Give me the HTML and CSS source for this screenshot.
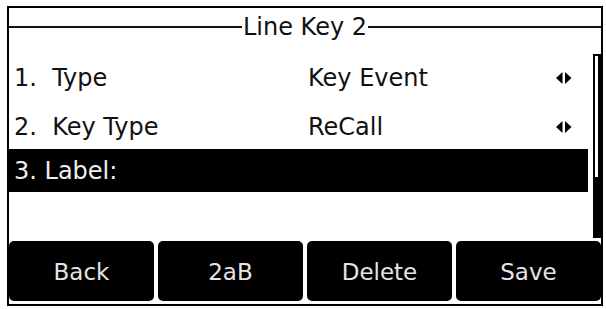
FILE: index.html
```html
<!DOCTYPE html>
<html>
<head>
<meta charset="utf-8">
<link rel="stylesheet" href="styles.css">
</head>
<body>
<div class="screen">
  <div class="title">
    <span class="rule"></span>
    <span class="title-text">Line Key 2</span>
    <span class="rule"></span>
  </div>
  <div class="body">
    <div class="list">
      <div class="row row1">
        <span class="label">1.  Type</span>
        <span class="value">Key Event</span>
        <svg class="arrows" width="16" height="12" viewBox="0 0 16 12"><polygon points="0,6 6.5,0 6.5,12"/><polygon points="9,0 15.5,6 9,12"/></svg>
      </div>
      <div class="row row2">
        <span class="label">2.  Key Type</span>
        <span class="value">ReCall</span>
        <svg class="arrows" width="16" height="12" viewBox="0 0 16 12"><polygon points="0,6 6.5,0 6.5,12"/><polygon points="9,0 15.5,6 9,12"/></svg>
      </div>
      <div class="row row3 selected">
        <span class="label">3. Label:</span>
      </div>
    </div>
    <div class="scroll">
      <div class="thumb"></div>
    </div>
  </div>
  <div class="softkeys">
    <div class="key">Back</div>
    <div class="key">2aB</div>
    <div class="key">Delete</div>
    <div class="key">Save</div>
  </div>
</div>
</body>
</html>
```

FILE: styles.css
```css
html, body {
  margin: 0;
  padding: 0;
  background: #fff;
}
body {
  width: 606px;
  height: 309px;
  overflow: hidden;
  font-family: "DejaVu Sans", Verdana, sans-serif;
  color: #111;
}
.screen {
  margin: 6px 0 0 7px;
  width: 592px;
  height: 296px;
  border: 2px solid #000;
  display: flex;
  flex-direction: column;
  background: #fff;
}
.title {
  height: 38px;
  display: flex;
  align-items: center;
}
.rule {
  flex: 1;
  height: 2px;
  background: #111;
}
.title-text {
  font-size: 24px;
  line-height: 24px;
  padding: 0 1px;
}
.body {
  height: 195px;
  display: flex;
}
.list {
  width: 579px;
  padding-top: 9px;
}
.row {
  display: flex;
  align-items: center;
  font-size: 24px;
  line-height: 24px;
  white-space: pre;
}
.row1 { height: 46px; }
.row2 { height: 44px; padding-top: 4px; }
.row3 { height: 43px; }
.selected {
  background: #000;
  color: #f0f0f0;
}
.label {
  width: 294px;
  padding-left: 5px;
}
.value {
  width: 248px;
}
.arrows {
  fill: #000;
}
.scroll {
  margin-left: 5px;
  margin-top: 8px;
  width: 8px;
  height: 184px;
  background: #000;
}
.thumb {
  margin: 2px 3px 0 2px;
  height: 121px;
  background: #fff;
}
.softkeys {
  display: flex;
  gap: 4px;
  height: 60px;
  padding-bottom: 3px;
}
.key {
  flex: 1;
  background: #000;
  border-radius: 5px;
  color: #e4e4e4;
  font-size: 23px;
  display: flex;
  align-items: center;
  justify-content: center;
  padding-top: 2px;
}
```
